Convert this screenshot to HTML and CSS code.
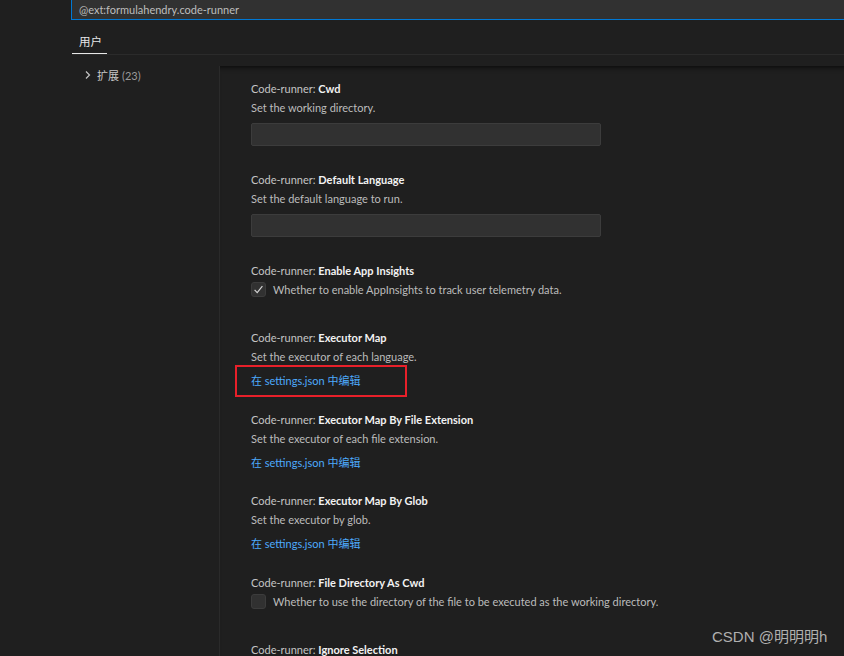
FILE: index.html
```html
<!DOCTYPE html>
<html lang="zh">
<head>
<meta charset="utf-8">
<title>Settings</title>
<link rel="stylesheet" href="styles.css">
</head>
<body>
<div class="search"><span class="search-text">@ext:formulahendry.code-runner</span></div>
<div class="tabs"><div class="tab">用户</div></div>
<div class="main">
  <div class="tree">
    <div class="tree-item">
      <svg class="chev" width="8" height="10" viewBox="0 0 8 10"><path d="M2 1.5 L5.5 5 L2 8.5" fill="none" stroke="#c5c5c5" stroke-width="1.2"/></svg>
      <span class="tree-label">扩展</span><span class="tree-count">(23)</span>
    </div>
  </div>
  <div class="panel">
    <div class="item item-input">
      <div class="title"><span class="cat">Code-runner: </span><span class="name">Cwd</span></div>
      <div class="desc">Set the working directory.</div>
      <div class="input"></div>
    </div>
    <div class="item item-input">
      <div class="title"><span class="cat">Code-runner: </span><span class="name">Default Language</span></div>
      <div class="desc">Set the default language to run.</div>
      <div class="input"></div>
    </div>
    <div class="item item-check">
      <div class="title"><span class="cat">Code-runner: </span><span class="name">Enable App Insights</span></div>
      <div class="check-row">
        <span class="checkbox"><svg width="13" height="13" viewBox="0 0 13 13"><path d="M2.6 6.8 L5.2 9.6 L10.4 3.2" fill="none" stroke="#d4d4d4" stroke-width="1.2"/></svg></span>
        <span class="desc">Whether to enable AppInsights to track user telemetry data.</span>
      </div>
    </div>
    <div class="item item-link">
      <div class="title"><span class="cat">Code-runner: </span><span class="name">Executor Map</span></div>
      <div class="desc">Set the executor of each language.</div>
      <div class="link-row"><span class="link">在 settings.json 中编辑</span><span class="highlight"></span></div>
    </div>
    <div class="item item-link">
      <div class="title"><span class="cat">Code-runner: </span><span class="name">Executor Map By File Extension</span></div>
      <div class="desc">Set the executor of each file extension.</div>
      <div class="link-row"><span class="link">在 settings.json 中编辑</span></div>
    </div>
    <div class="item item-link">
      <div class="title"><span class="cat">Code-runner: </span><span class="name">Executor Map By Glob</span></div>
      <div class="desc">Set the executor by glob.</div>
      <div class="link-row"><span class="link">在 settings.json 中编辑</span></div>
    </div>
    <div class="item item-check">
      <div class="title"><span class="cat">Code-runner: </span><span class="name">File Directory As Cwd</span></div>
      <div class="check-row">
        <span class="checkbox"></span>
        <span class="desc">Whether to use the directory of the file to be executed as the working directory.</span>
      </div>
    </div>
    <div class="item item-check">
      <div class="title"><span class="cat">Code-runner: </span><span class="name">Ignore Selection</span></div>
    </div>
  </div>
</div>
<div class="watermark">CSDN @明明明h</div>
</body>
</html>
```
FILE: styles.css
```css
html, body {
  margin: 0;
  padding: 0;
  height: 100%;
  overflow: hidden;
}
body {
  background: #1f1f1f;
  font-family: "Lato", "Noto Sans CJK SC", sans-serif;
  font-size: 11px;
  color: #c0c0c0;
  position: relative;
}
.search {
  margin-left: 71px;
  height: 19px;
  background: #313131;
  border-left: 1px solid #0078d4;
  border-bottom: 1px solid #0078d4;
  display: flex;
  align-items: center;
  padding-left: 7px;
}
.search-text {
  color: #bdbdbd;
  font-size: 11px;
  line-height: 14px;
}
.tabs {
  margin-left: 72px;
  height: 34px;
  border-bottom: 1px solid #2b2b2b;
  display: flex;
}
.tab {
  width: 35px;
  box-sizing: border-box;
  padding-left: 7px;
  padding-top: 13px;
  height: 34px;
  color: #e7e7e7;
  font-size: 11.5px;
  border-bottom: 1px solid #e7e7e7;
}
.main {
  display: flex;
  margin-top: 11px;
}
.tree {
  width: 219px;
  flex: none;
}
.tree-item {
  display: flex;
  align-items: center;
  height: 18px;
  padding-left: 84px;
  gap: 3px;
}
.chev { margin-right: 2px; }
.tree-label { color: #c8c8c8; }
.tree-count { color: #9a9a9a; }
.panel {
  flex: 1;
  border-left: 1px solid #2a2a2a;
  box-shadow: #000 0 6px 6px -6px inset;
  padding-left: 31px;
  padding-top: 1px;
  height: 700px;
}
.item {
  padding-top: 12px;
  padding-bottom: 12px;
}
.item-check { padding-bottom: 17px; }
.item-link { padding-bottom: 7.6px; }
.title {
  line-height: 19px;
  height: 19px;
  white-space: nowrap;
}
.cat { color: #c4c4c4; }
.name { color: #f2f2f2; font-weight: bold; }
.desc {
  line-height: 19px;
  color: #bcbcbc;
  white-space: nowrap;
}
.input {
  margin-top: 6px;
  width: 350px;
  height: 23px;
  box-sizing: border-box;
  background: #313131;
  border: 1px solid #3c3c3c;
  border-radius: 2px;
}
.check-row {
  display: flex;
  align-items: center;
  gap: 7px;
  height: 19px;
}
.checkbox {
  width: 13px;
  height: 13px;
  flex: none;
  background: #313131;
  border: 1px solid #3c3c3c;
  border-radius: 3px;
  display: flex;
}
.link-row {
  position: relative;
  margin-top: 5px;
  line-height: 19px;
}
.link { color: #4daafc; }
.highlight {
  position: absolute;
  left: -16px;
  top: -6px;
  width: 172px;
  height: 32px;
  box-sizing: border-box;
  border: 2px solid #e8202a;
}
.watermark {
  position: absolute;
  left: 712px;
  top: 628px;
  font-family: "Liberation Sans", "Noto Sans CJK SC", sans-serif;
  font-size: 15px;
  color: #b0b0b0;
  line-height: 18px;
}
```
